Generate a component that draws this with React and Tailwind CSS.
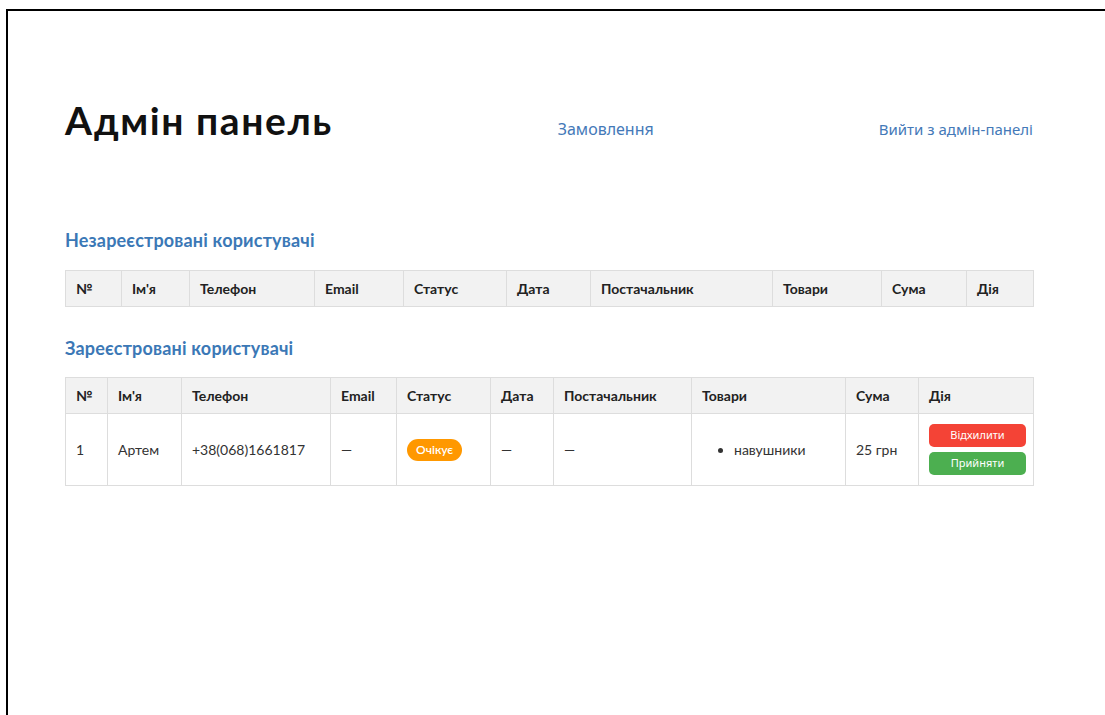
import React from "react";

const unregisteredCols = [
  { label: "№", w: "w-[56px]" },
  { label: "Ім'я", w: "w-[68px]" },
  { label: "Телефон", w: "w-[125px]" },
  { label: "Email", w: "w-[89px]" },
  { label: "Статус", w: "w-[103px]" },
  { label: "Дата", w: "w-[84px]" },
  { label: "Постачальник", w: "w-[182px]" },
  { label: "Товари", w: "w-[109px]" },
  { label: "Сума", w: "w-[85px]" },
  { label: "Дія", w: "w-[67px]" },
];

const registeredCols = [
  { label: "№", w: "w-[42px]" },
  { label: "Ім'я", w: "w-[74px]" },
  { label: "Телефон", w: "w-[149px]" },
  { label: "Email", w: "w-[66px]" },
  { label: "Статус", w: "w-[94px]" },
  { label: "Дата", w: "w-[63px]" },
  { label: "Постачальник", w: "w-[138px]" },
  { label: "Товари", w: "w-[154px]" },
  { label: "Сума", w: "w-[73px]" },
  { label: "Дія", w: "w-[115px]" },
];

const orders = [
  {
    id: 1,
    name: "Артем",
    phone: "+38(068)1661817",
    email: "—",
    status: "Очікує",
    date: "—",
    supplier: "—",
    items: ["навушники"],
    total: "25 грн",
  },
];

const HeadRow = ({ cols }) => (
  <thead>
    <tr className="bg-[#f2f2f2]">
      {cols.map((c) => (
        <th
          key={c.label}
          className={`${c.w} h-[36px] border border-[#dddddd] px-[10px] text-left text-[14px] font-bold text-[#222]`}
        >
          {c.label}
        </th>
      ))}
    </tr>
  </thead>
);

const OrdersTable = ({ cols, rows }) => (
  <table className="w-full table-fixed border-collapse font-['Lato',sans-serif]">
    <HeadRow cols={cols} />
    <tbody>
      {rows.map((o) => (
        <tr key={o.id} className="text-[14px] text-[#333]">
          <td className="border border-[#dddddd] p-[10px]">{o.id}</td>
          <td className="border border-[#dddddd] p-[10px]">{o.name}</td>
          <td className="border border-[#dddddd] p-[10px]">{o.phone}</td>
          <td className="border border-[#dddddd] p-[10px]">{o.email}</td>
          <td className="border border-[#dddddd] p-[10px]">
            <span className="inline-flex h-[22px] items-center rounded-full bg-[#ff9800] px-[9px] text-[12px] font-semibold text-white">
              {o.status}
            </span>
          </td>
          <td className="border border-[#dddddd] p-[10px]">{o.date}</td>
          <td className="border border-[#dddddd] p-[10px]">{o.supplier}</td>
          <td className="border border-[#dddddd] p-[10px]">
            <ul className="list-disc pl-[32px]">
              {o.items.map((it) => (
                <li key={it}>{it}</li>
              ))}
            </ul>
          </td>
          <td className="border border-[#dddddd] p-[10px]">{o.total}</td>
          <td className="border border-[#dddddd] p-[10px]">
            <div className="flex flex-col gap-[5px] font-['Noto_Sans',sans-serif]">
              <button className="h-[23px] w-[97px] rounded-[5px] bg-[#f44336] text-[11px] text-white">
                Відхилити
              </button>
              <button className="h-[23px] w-[97px] rounded-[5px] bg-[#4caf50] text-[11px] text-white">
                Прийняти
              </button>
            </div>
          </td>
        </tr>
      ))}
    </tbody>
  </table>
);

export default function App() {
  return (
    <div className="min-h-screen bg-white pl-[6px] pt-[9px]">
      <div className="min-h-[706px] border-l-2 border-t-2 border-black pl-[57px] pr-[72px] font-['Lato',sans-serif]">
        {/* Header */}
        <header className="flex items-baseline justify-between pt-[80px]">
          <h1 className="text-[39px] font-bold tracking-[0.04em] text-[#111]">Адмін панель</h1>
          <a className="font-['Noto_Sans',sans-serif] text-[16px] text-[#4479b8]">Замовлення</a>
          <a className="font-['Noto_Sans',sans-serif] text-[15px] text-[#4479b8]">
            Вийти з адмін-панелі
          </a>
        </header>

        <section className="mt-[77px]">
          <h2 className="mb-[16px] text-[18px] font-bold tracking-[0.01em] text-[#3b78b6]">
            Незареєстровані користувачі
          </h2>
          <OrdersTable cols={unregisteredCols} rows={[]} />
        </section>

        <section className="mt-[28px]">
          <h2 className="mb-[15px] text-[18px] font-bold tracking-[0.01em] text-[#3b78b6]">
            Зареєстровані користувачі
          </h2>
          <OrdersTable cols={registeredCols} rows={orders} />
        </section>
      </div>
    </div>
  );
}
